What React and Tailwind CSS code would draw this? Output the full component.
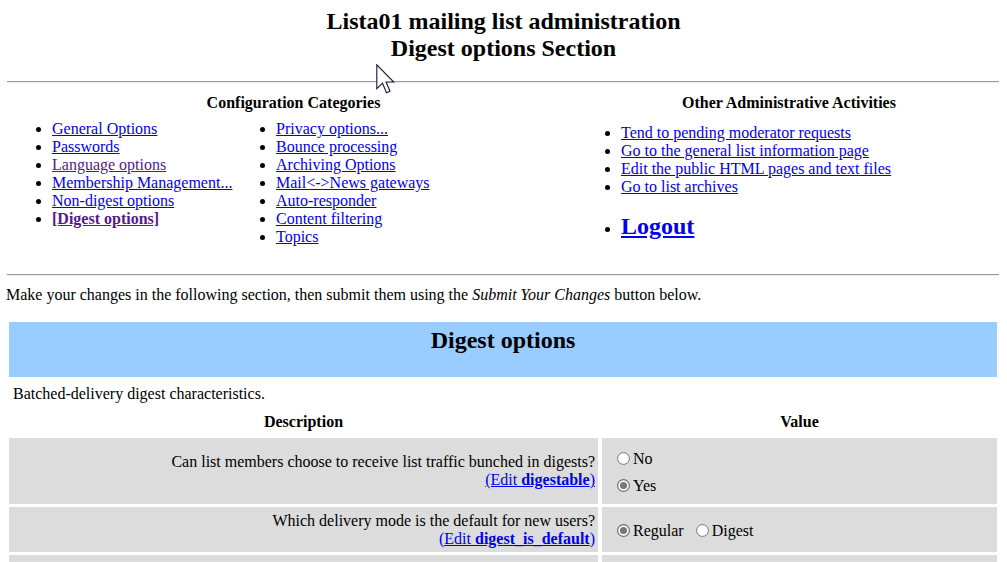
import React from "react";

const BLUE = "text-[#0000ee] underline";
const PURPLE = "text-[#551a8b] underline";

function Radio({ checked }) {
  return (
    <svg width="13" height="13" viewBox="0 0 13 13" className="shrink-0 block">
      <circle cx="6.5" cy="6.5" r="5.9" fill="#ffffff" stroke={checked ? "#6f6f6f" : "#767676"} strokeWidth={checked ? "1.2" : "1"} />
      {checked && <circle cx="6.5" cy="6.5" r="3.6" fill="#787878" />}
    </svg>
  );
}

function Cursor() {
  return (
    <svg
      width="19"
      height="30"
      viewBox="0 0 12.6 20"
      className="absolute left-[376px] top-[64px]"
    >
      <path
        d="M0.5 0.5 L0.5 16.5 L4.3 12.8 L7 19.2 L9.3 18.2 L6.7 12 L11.8 12 Z"
        fill="#ffffff"
        stroke="#1a1a3a"
        strokeWidth="0.75"
        strokeLinejoin="miter"
      />
    </svg>
  );
}

export default function App() {
  const col1 = [
    ["General Options", BLUE],
    ["Passwords", BLUE],
    ["Language options", PURPLE],
    ["Membership Management...", BLUE],
    ["Non-digest options", BLUE],
  ];
  const col2 = [
    "Privacy options...",
    "Bounce processing",
    "Archiving Options",
    "Mail<->News gateways",
    "Auto-responder",
    "Content filtering",
    "Topics",
  ];
  const other = [
    "Tend to pending moderator requests",
    "Go to the general list information page",
    "Edit the public HTML pages and text files",
    "Go to list archives",
  ];

  return (
    <div className="relative w-[1007px] h-[562px] overflow-hidden bg-white text-black font-['Liberation_Serif','Times_New_Roman',serif] text-[16px] leading-[18px]">
      {/* Title */}
      <div className="pt-[8px] px-[8px] text-center font-bold text-[24px] leading-[27px]">
        <div>Lista01 mailing list administration</div>
        <div>Digest options Section</div>
      </div>

      <div className="mt-[19px] ml-[7px] mr-[8px] h-[2px] border-t border-b border-t-[#9a9a9a] border-b-[#eeeeee]" />

      {/* Categories */}
      <div className="mt-[11px] flex px-[8px] h-[150px]">
        <div className="w-[571px]">
          <div className="text-center font-bold">Configuration Categories</div>
          <div className="mt-[8px] flex pl-[4px]">
            <ul className="w-[224px] list-disc pl-[40px]">
              {col1.map(([t, c]) => (
                <li key={t}>
                  <a className={c}>{t}</a>
                </li>
              ))}
              <li>
                <a className={PURPLE + " font-bold"}>[Digest options]</a>
              </li>
            </ul>
            <ul className="list-disc pl-[40px]">
              {col2.map((t) => (
                <li key={t}>
                  <a className={BLUE}>{t}</a>
                </li>
              ))}
            </ul>
          </div>
        </div>
        <div className="flex-1">
          <div className="text-center font-bold">Other Administrative Activities</div>
          <ul className="mt-[12px] ml-[2px] list-disc pl-[40px]">
            {other.map((t) => (
              <li key={t}>
                <a className={BLUE}>{t}</a>
              </li>
            ))}
          </ul>
          <ul className="mt-[17px] ml-[2px] list-disc pl-[40px]">
            <li className="leading-[27px]">
              <a className={BLUE + " font-bold text-[24px] leading-[27px]"}>Logout</a>
            </li>
          </ul>
        </div>
      </div>

      <div className="mt-[30px] ml-[7px] mr-[8px] h-[2px] border-t border-b border-t-[#9a9a9a] border-b-[#eeeeee]" />

      <div className="mt-[10px] pl-[6px]">
        Make your changes in the following section, then submit them using the <i>Submit Your Changes</i> button below.
      </div>

      {/* Section header band */}
      <div className="mt-[18px] ml-[9px] w-[988px] h-[55px] bg-[#99ccff] pt-[5px] text-center font-bold text-[24px] leading-[27px]">
        Digest options
      </div>

      <div className="mt-[8px] pl-[13px]">Batched-delivery digest characteristics.</div>

      <div className="mt-[10px] ml-[9px] flex gap-[4px] font-bold">
        <div className="w-[589px] text-center">Description</div>
        <div className="w-[395px] text-center">Value</div>
      </div>

      {/* Row 1 */}
      <div className="mt-[7px] ml-[9px] flex gap-[4px] h-[66px]">
        <div className="w-[589px] bg-[#dcdcdc] flex flex-col justify-center items-end text-right pr-[3px]">
          <div>Can list members choose to receive list traffic bunched in digests?</div>
          <div>
            <a className={BLUE}>
              (Edit <b>digestable</b>)
            </a>
          </div>
        </div>
        <div className="w-[395px] bg-[#dcdcdc] flex flex-col justify-center pl-[15px] pt-[2px]">
          <div className="h-[27px] flex items-center gap-[3px]">
            <Radio />
            <span>No</span>
          </div>
          <div className="h-[27px] flex items-center gap-[3px]">
            <Radio checked />
            <span>Yes</span>
          </div>
        </div>
      </div>

      {/* Row 2 */}
      <div className="mt-[3px] ml-[9px] flex gap-[4px] h-[45px]">
        <div className="w-[589px] bg-[#dcdcdc] flex flex-col justify-center items-end text-right pr-[3px]">
          <div>Which delivery mode is the default for new users?</div>
          <div>
            <a className={BLUE}>
              (Edit <b>digest_is_default</b>)
            </a>
          </div>
        </div>
        <div className="w-[395px] bg-[#dcdcdc] flex items-center pl-[15px] pt-[2px]">
          <Radio checked />
          <span className="ml-[3px]">Regular</span>
          <span className="ml-[12px]">
            <Radio />
          </span>
          <span className="ml-[3px]">Digest</span>
        </div>
      </div>

      {/* Row 3 (clipped) */}
      <div className="mt-[3px] ml-[9px] flex gap-[4px] h-[40px]">
        <div className="w-[589px] bg-[#dcdcdc]" />
        <div className="w-[395px] bg-[#dcdcdc]" />
      </div>

      <Cursor />
    </div>
  );
}
